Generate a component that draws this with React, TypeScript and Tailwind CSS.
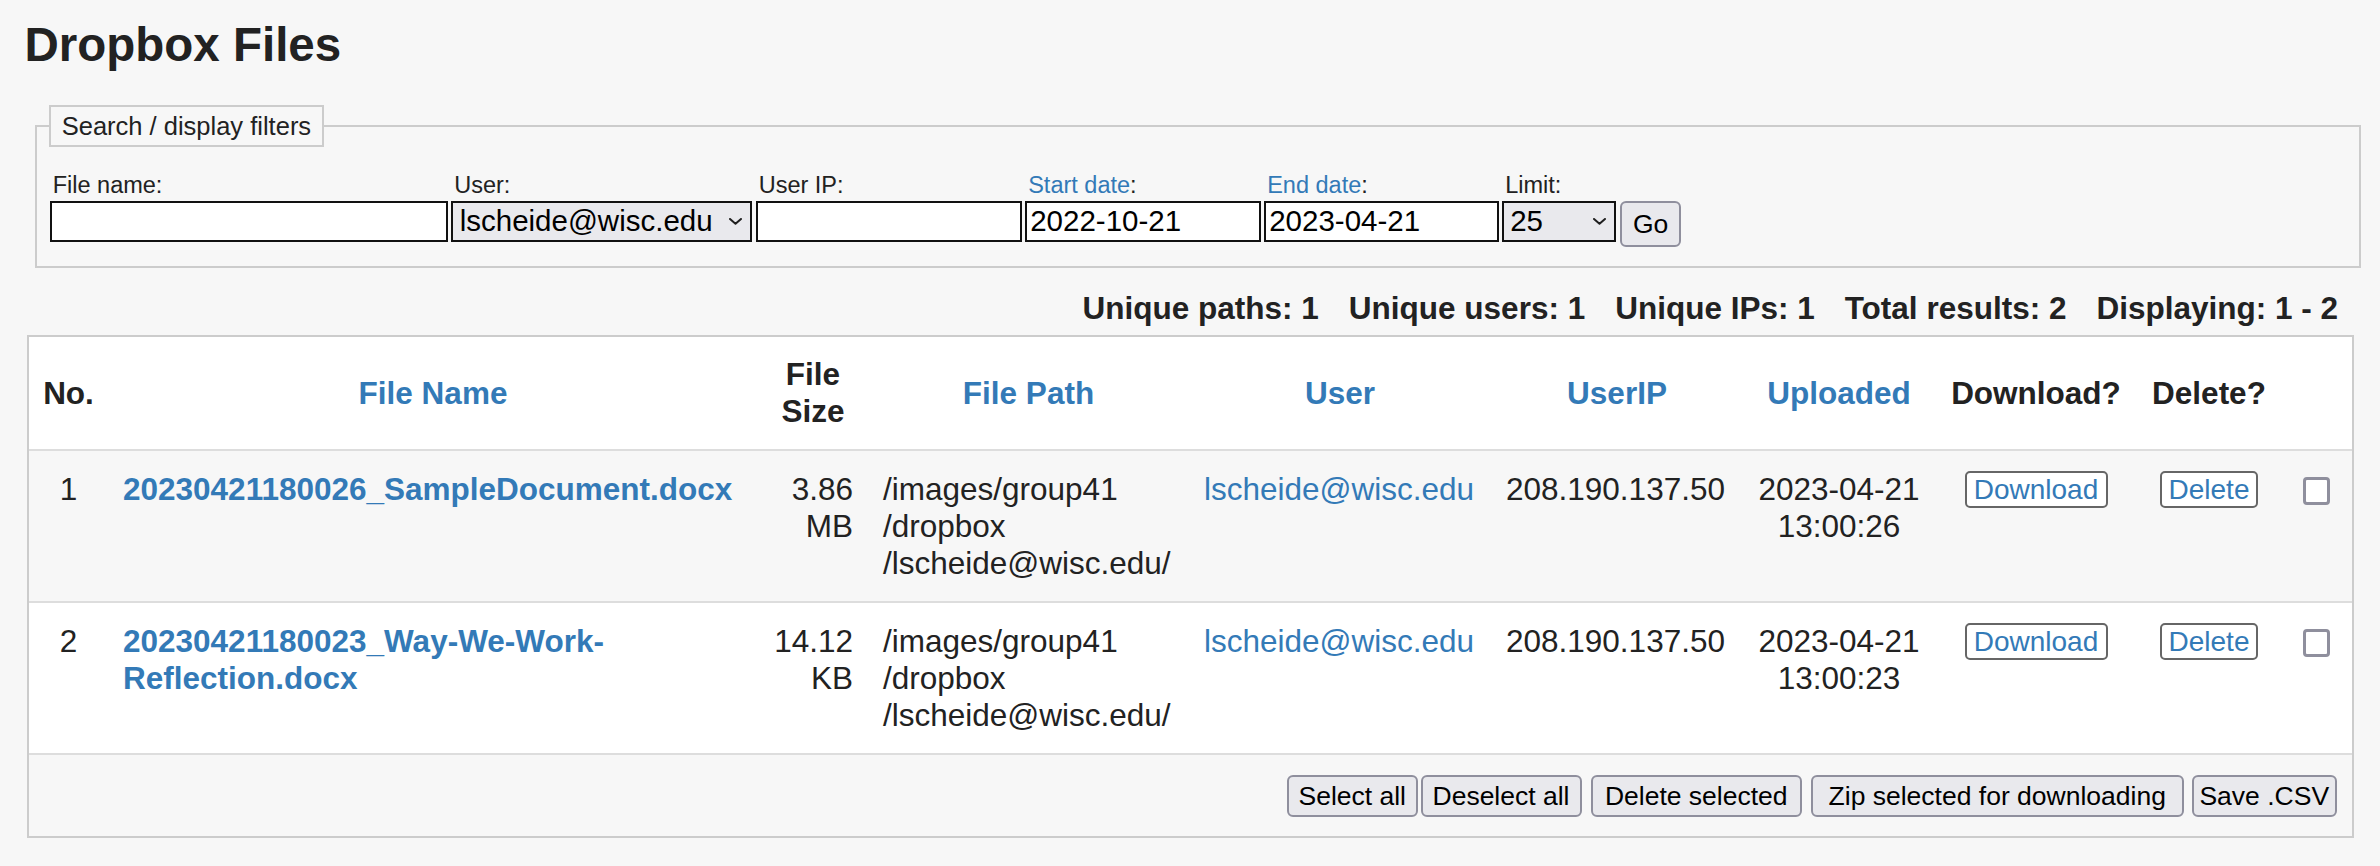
import React from "react";

const Chevron = () => (
  <svg width="13" height="7" viewBox="0 0 13 7" fill="none" className="shrink-0">
    <polyline
      points="1,1 6.5,5.8 12,1"
      stroke="#1f1f1f"
      strokeWidth="2"
      strokeLinecap="round"
      strokeLinejoin="round"
    />
  </svg>
);

const Field = ({ label, children }: { label: React.ReactNode; children: React.ReactNode }) => (
  <div className="flex flex-col">
    <label className="mb-[2px] h-[27px] pl-[3px] text-[23.5px] leading-[27px]">{label}</label>
    {children}
  </div>
);

const inputCls =
  "h-[41px] border-2 border-[#111] bg-white px-[3px] text-[29.5px] text-black outline-none";

const rows = [
  {
    no: 1,
    name: "20230421180026_SampleDocument.docx",
    size: ["3.86", "MB"],
    time: "13:00:26",
    bg: "bg-[#f7f7f7]",
  },
  {
    no: 2,
    name: "20230421180023_Way-We-Work-Reflection.docx",
    size: ["14.12", "KB"],
    time: "13:00:23",
    bg: "bg-white",
  },
];

const th = "px-[15px] py-[19.5px] align-middle text-center font-bold leading-[36.7px]";
const td = "border-t-2 border-[#ddd] px-[15px] pt-[20px] pb-[20px] align-top leading-[36.7px]";

export default function App() {
  return (
    <div className="min-h-screen bg-[#f7f7f7] pt-[17px] font-['Liberation_Sans',Arial,sans-serif] text-[#222]">
      <h1 className="pl-[24.5px] text-[47.5px] font-bold leading-[55px]">Dropbox Files</h1>

      {/* filters */}
      <fieldset className="mt-[33px] ml-[34.7px] mr-[19px] border-2 border-[#ccc] pl-[12px] pr-[12px] pt-[25px] pb-[19px]">
        <legend className="border-2 border-[#ccc] px-[11px] py-[5px] text-[25.5px] leading-[28px]">
          Search / display filters
        </legend>
        <div className="flex items-start gap-[3.5px] pl-[1px]">
          <Field label="File name:">
            <input className={`${inputCls} w-[398px]`} defaultValue="" />
          </Field>
          <Field label="User:">
            <div className="flex h-[41px] w-[301px] items-center justify-between border-2 border-[#111] bg-[#e9e9ed] pl-[6.5px] pr-[8px] text-[29.5px] text-black">
              <span>lscheide@wisc.edu</span>
              <Chevron />
            </div>
          </Field>
          <Field label="User IP:">
            <input className={`${inputCls} w-[266px]`} defaultValue="" />
          </Field>
          <Field
            label={
              <>
                <span className="text-[#337ab7]">Start date</span>:
              </>
            }
          >
            <input className={`${inputCls} w-[235.5px]`} defaultValue="2022-10-21" />
          </Field>
          <Field
            label={
              <>
                <span className="text-[#337ab7]">End date</span>:
              </>
            }
          >
            <input className={`${inputCls} w-[234.5px]`} defaultValue="2023-04-21" />
          </Field>
          <Field label="Limit:">
            <div className="flex items-start gap-[4px]">
              <div className="flex h-[41px] w-[114px] items-center justify-between border-2 border-[#111] bg-[#e9e9ed] pl-[6px] pr-[8px] text-[29.5px] text-black">
                <span>25</span>
                <Chevron />
              </div>
              <button className="h-[46px] w-[61px] rounded-[6px] border-2 border-[#8f8f9d] bg-[#e9e9ed] text-[26.5px] leading-none text-black">
                Go
              </button>
            </div>
          </Field>
        </div>
      </fieldset>

      {/* stats */}
      <div className="mt-[22px] mr-[26px] flex justify-end gap-[30px] pr-[16px] text-[31.5px] font-bold leading-[36.7px]">
        <span>Unique paths: 1</span>
        <span>Unique users: 1</span>
        <span>Unique IPs: 1</span>
        <span>Total results: 2</span>
        <span>Displaying: 1 - 2</span>
      </div>

      {/* table */}
      <div className="mt-[8px] ml-[27px] mr-[26px] border-2 border-[#ccc]">
        <table className="w-full table-fixed border-separate border-spacing-0 text-[31.5px]">
          <colgroup>
            <col className="w-[79px]" />
            <col className="w-[650px]" />
            <col className="w-[110px]" />
            <col className="w-[321px]" />
            <col className="w-[302px]" />
            <col className="w-[252px]" />
            <col className="w-[192px]" />
            <col className="w-[202px]" />
            <col className="w-[144px]" />
            <col className="w-[71px]" />
          </colgroup>
          <thead>
            <tr className="bg-white">
              <th className={`${th} !px-[12px] whitespace-nowrap`}>No.</th>
              <th className={`${th} whitespace-nowrap text-[#337ab7]`}>File Name</th>
              <th className={th}>File Size</th>
              <th className={`${th} whitespace-nowrap text-[#337ab7]`}>File Path</th>
              <th className={`${th} whitespace-nowrap text-[#337ab7]`}>User</th>
              <th className={`${th} whitespace-nowrap text-[#337ab7]`}>UserIP</th>
              <th className={`${th} whitespace-nowrap text-[#337ab7]`}>Uploaded</th>
              <th className={`${th} whitespace-nowrap`}>Download?</th>
              <th className={`${th} whitespace-nowrap`}>Delete?</th>
              <th className={th}></th>
            </tr>
          </thead>
          <tbody>
            {rows.map((r) => (
              <tr key={r.no} className={r.bg}>
                <td className={`${td} !px-[12px] text-center`}>{r.no}</td>
                <td className={`${td} font-bold text-[#337ab7]`}>{r.name}</td>
                <td className={`${td} text-right`}>
                  <span className="block">{r.size[0]}</span>
                  <span className="block">{r.size[1]}</span>
                </td>
                <td className={`${td} whitespace-nowrap`}>
                  <span className="block">/images/group41</span>
                  <span className="block">/dropbox</span>
                  <span className="block">/lscheide@wisc.edu/</span>
                </td>
                <td className={`${td} whitespace-nowrap text-[#337ab7]`}>lscheide@wisc.edu</td>
                <td className={`${td} whitespace-nowrap`}>208.190.137.50</td>
                <td className={`${td} text-center whitespace-nowrap`}>
                  <span className="block">2023-04-21</span>
                  <span className="block">{r.time}</span>
                </td>
                <td className={`${td} text-center`}>
                  <button className="h-[37px] w-[143px] rounded-[5px] border-2 border-[#666] bg-white align-top text-[28px] leading-none text-[#337ab7]">
                    Download
                  </button>
                </td>
                <td className={`${td} text-center`}>
                  <button className="h-[37px] w-[98px] rounded-[5px] border-2 border-[#666] bg-white align-top text-[28px] leading-none text-[#337ab7]">
                    Delete
                  </button>
                </td>
                <td className={`${td} text-center`}>
                  <input
                    type="checkbox"
                    className="mt-[6px] h-[27.5px] w-[27.5px] appearance-none rounded-[4px] border-[3px] border-[#8f8f9d] bg-white align-top"
                  />
                </td>
              </tr>
            ))}
            <tr className="bg-[#f7f7f7]">
              <td colSpan={10} className="border-t-2 border-[#ddd] pt-[19.5px] pb-[19.5px] pr-[15.5px]">
                <div className="flex justify-end text-[26.5px] text-black">
                  <button className="h-[42px] w-[131.5px] rounded-[6px] border-2 border-[#8f8f9d] bg-[#e9e9ed] leading-none">
                    Select all
                  </button>
                  <button className="ml-[2.5px] h-[42px] w-[161px] rounded-[6px] border-2 border-[#8f8f9d] bg-[#e9e9ed] leading-none">
                    Deselect all
                  </button>
                  <button className="ml-[9px] h-[42px] w-[211.5px] rounded-[6px] border-2 border-[#8f8f9d] bg-[#e9e9ed] leading-none">
                    Delete selected
                  </button>
                  <button className="ml-[9px] h-[42px] w-[372.5px] rounded-[6px] border-2 border-[#8f8f9d] bg-[#e9e9ed] leading-none">
                    Zip selected for downloading
                  </button>
                  <button className="ml-[8.5px] h-[42px] w-[144.5px] rounded-[6px] border-2 border-[#8f8f9d] bg-[#e9e9ed] leading-none">
                    Save .CSV
                  </button>
                </div>
              </td>
            </tr>
          </tbody>
        </table>
      </div>
    </div>
  );
}
